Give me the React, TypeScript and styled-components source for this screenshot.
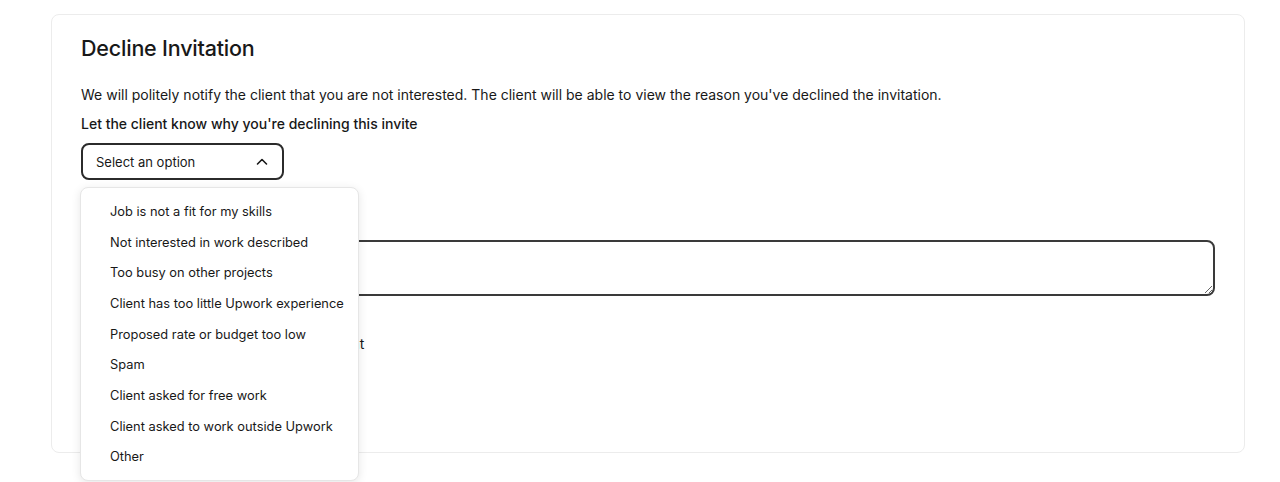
import { useState } from 'react'
import styled, { createGlobalStyle } from 'styled-components'

const Global = createGlobalStyle`
  html, body { margin: 0; background: #ffffff; }
  body { font-family: Inter, "Liberation Sans", Arial, sans-serif; color: #181818; }
  * { box-sizing: border-box; }
`

const Page = styled.div`
  padding: 14px 35px 0 51px;
  height: 482px;
  overflow: hidden;
`

const Card = styled.section`
  border: 1px solid #ececec;
  border-radius: 8px;
  padding: 18px 29px 30px 29px;
  height: 439px;
`

const Title = styled.h2`
  margin: 0 0 22px;
  font-size: 21.5px;
  font-weight: 500;
  letter-spacing: -0.2px;
  line-height: 30px;
`

const Lead = styled.p`
  margin: 0 0 9px;
  font-size: 14px;
  line-height: 20px;
`

const Label = styled.div`
  margin: 0 0 9px;
  font-size: 14px;
  line-height: 20px;
  font-weight: 500;
`

const SelectWrap = styled.div`
  position: relative;
  width: 203px;
`

const SelectButton = styled.button`
  width: 203px;
  height: 37px;
  border: 2px solid #2b2b2b;
  border-radius: 8px;
  background: #fff;
  padding: 0 13px;
  display: flex;
  align-items: center;
  justify-content: space-between;
  font-family: inherit;
  font-size: 13px;
  color: #181818;
  cursor: pointer;
`

const Menu = styled.ul`
  position: absolute;
  top: 44px;
  left: -1px;
  width: 279px;
  margin: 0;
  padding: 8px 0;
  list-style: none;
  background: #fff;
  border: 1px solid #e6e6e6;
  border-radius: 8px;
  box-shadow: 0 2px 10px rgba(0, 0, 0, 0.1);
  z-index: 2;
`

const MenuItem = styled.li`
  padding: 0 29px;
  height: 30.7px;
  display: flex;
  align-items: center;
  white-space: nowrap;
  font-size: 12.85px;
  color: #181818;
  cursor: pointer;
`

const FieldLabel = styled.div`
  margin: 30px 0 10px;
  font-size: 14px;
  font-weight: 500;
  line-height: 20px;
`

const Message = styled.textarea`
  display: block;
  width: 100%;
  height: 56px;
  border: 2px solid #3a3a3a;
  border-radius: 8px;
  font-family: inherit;
  font-size: 14px;
  padding: 8px 12px;
`

const CheckRow = styled.label`
  display: flex;
  align-items: center;
  gap: 12px;
  margin-top: 38px;
  font-size: 14px;
  line-height: 20px;
`

const Box = styled.span`
  width: 18px;
  height: 18px;
  border: 2px solid #3a3a3a;
  border-radius: 4px;
  flex: none;
`

const OPTIONS = [
  'Job is not a fit for my skills',
  'Not interested in work described',
  'Too busy on other projects',
  'Client has too little Upwork experience',
  'Proposed rate or budget too low',
  'Spam',
  'Client asked for free work',
  'Client asked to work outside Upwork',
  'Other',
]

function Chevron() {
  return (
    <svg width="14" height="14" viewBox="0 0 14 14" fill="none">
      <path d="M2.5 9L7 4.5L11.5 9" stroke="#181818" strokeWidth="1.6" strokeLinecap="round" strokeLinejoin="round" />
    </svg>
  )
}

export default function App() {
  const [open, setOpen] = useState(true)
  const [value, setValue] = useState('')

  return (
    <Page>
      <Global />
      <Card>
        <Title>Decline Invitation</Title>
        <Lead>We will politely notify the client that you are not interested. The client will be able to view the reason you've declined the invitation.</Lead>
        <Label>Let the client know why you're declining this invite</Label>
        <SelectWrap>
          <SelectButton onClick={() => setOpen((o) => !o)}>
            <span>{value || 'Select an option'}</span>
            <Chevron />
          </SelectButton>
          {open && (
            <Menu>
              {OPTIONS.map((o) => (
                <MenuItem key={o} onClick={() => { setValue(o); setOpen(false) }}>{o}</MenuItem>
              ))}
            </Menu>
          )}
        </SelectWrap>
        <FieldLabel>Message (optional)</FieldLabel>
        <Message />
        <CheckRow><Box />Block future invitations from this client</CheckRow>
      </Card>
    </Page>
  )
}
